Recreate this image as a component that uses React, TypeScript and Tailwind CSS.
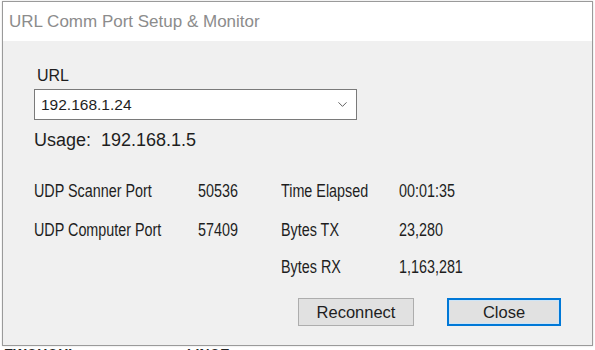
import type { ReactNode } from 'react';
import { ChevronDown } from 'lucide-react';

const ui = { fontFamily: '"Liberation Sans", Arial, sans-serif' };

// the grid labels in the screenshot are narrower than Arial at their height, so squeeze them
function T({ children }: { children: ReactNode }) {
  return <span className="inline-block origin-left scale-x-[0.82] whitespace-nowrap">{children}</span>;
}

function Row({ a, b, c, d }: { a?: string; b?: string; c: string; d: string }) {
  return (
    <div className="flex h-[20px] items-center text-[17.5px] leading-[20px]">
      <span className="w-[164px]"><T>{a}</T></span>
      <span className="w-[83px]"><T>{b}</T></span>
      <span className="w-[118px]"><T>{c}</T></span>
      <span><T>{d}</T></span>
    </div>
  );
}

export default function App() {
  return (
    <div className="relative flex h-[350px] w-[595px] flex-col overflow-hidden bg-white text-[#1e1e1e]" style={ui}>
      <div className="ml-[2px] mt-[1px] flex h-[345px] w-[591px] flex-col border border-[#9a9a9a] shadow-[0_0_2px_rgba(0,0,0,0.15)]">
        {/* title bar */}
        <div className="flex h-[39px] items-center bg-white pl-[6px] text-[17px] text-[#8c8c8c]">
          URL Comm Port Setup &amp; Monitor
        </div>

        {/* body */}
        <div className="flex flex-1 flex-col bg-[#f0f0f0] pl-[31px]">
          <div className="mt-[25px] pl-[3px] text-[16px] leading-[20px]">URL</div>
          <div className="mt-[3px] flex h-[31px] w-[323px] items-center justify-between border border-[#7a7a7a] bg-white pl-[6px] pr-[6px] text-[15.5px] leading-[20px]">
            <span>192.168.1.24</span>
            <ChevronDown size={15} strokeWidth={1.5} className="text-[#555]" />
          </div>
          <div className="mt-[9px] text-[18px] leading-[22px]">
            Usage:&nbsp; 192.168.1.5
          </div>

          <div className="mt-[30px] flex flex-col gap-[19px]">
            <Row a="UDP Scanner Port" b="50536" c="Time Elapsed" d="00:01:35" />
            <Row a="UDP Computer Port" b="57409" c="Bytes TX" d="23,280" />
          </div>
          <div className="mt-[17px]">
            <Row c="Bytes RX" d="1,163,281" />
          </div>

          <div className="mt-[21px] flex gap-[33px] pl-[264px] text-[16.5px]">
            <button className="flex h-[28px] w-[116px] items-center justify-center border border-[#adadad] bg-[#e1e1e1] leading-none">
              Reconnect
            </button>
            <button className="flex h-[28px] w-[114px] items-center justify-center border-2 border-[#0078d7] bg-[#e1e1e1] leading-none shadow-[inset_0_0_0_1px_#cce4f7]">
              Close
            </button>
          </div>
        </div>
      </div>

      {/* window behind, cut off */}
      <div className="flex h-[4px] gap-[100px] overflow-hidden pl-[4px] text-[17px] font-bold leading-[20px] text-[#222]">
        <T>EWOHOHI</T>
        <T>LINOE</T>
      </div>
    </div>
  );
}
